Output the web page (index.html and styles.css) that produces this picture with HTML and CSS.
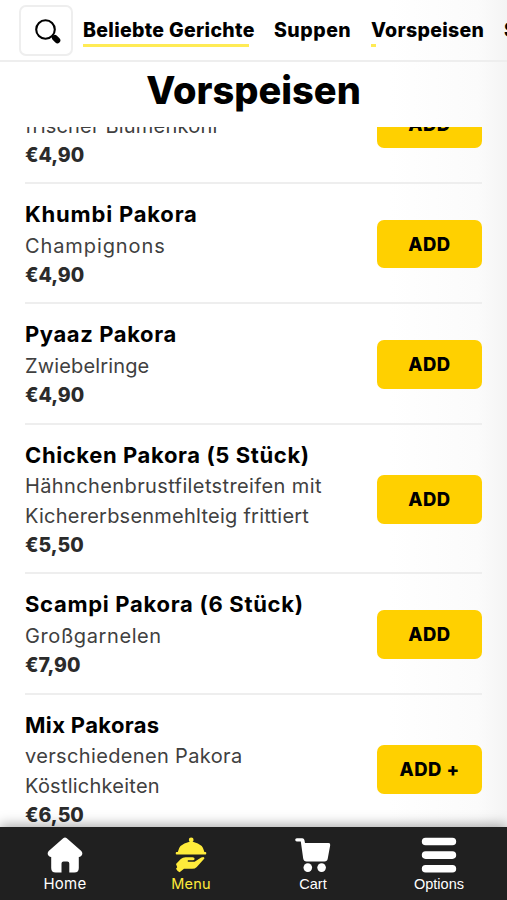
FILE: index.html
```html
<!DOCTYPE html>
<html lang="de">
<head>
<meta charset="utf-8">
<meta name="viewport" content="width=device-width, initial-scale=1">
<title>Vorspeisen</title>
<link rel="stylesheet" href="styles.css">
</head>
<body>
<div class="app">
  <header class="topbar">
    <button class="search" aria-label="Suche">
      <svg viewBox="0 0 26 26" width="26" height="26"><circle cx="10.5" cy="10.5" r="9.3" fill="none" stroke="#000" stroke-width="2.1"/><path d="M17 17l2 2" stroke="#000" stroke-width="2.4"/><path d="M19.9 18.9l2.5 2.5" stroke="#000" stroke-width="5.8" stroke-linecap="round"/></svg>
    </button>
    <nav class="tabs">
      <a class="tab tab-popular"><span>Beliebte Gerichte</span></a>
      <a class="tab tab-soups"><span>Suppen</span></a>
      <a class="tab tab-starters"><span>Vorspeisen</span></a>
      <a class="tab"><span>S</span></a>
    </nav>
  </header>
  <h1 class="heading">Vorspeisen</h1>
  <main class="list">
    <article class="dish dish-first">
      <div class="info"><p>frischer Blumenkohl</p><strong>€4,90</strong></div>
      <button class="add">ADD</button>
    </article>
    <article class="dish dish-khumbi">
      <div class="info"><h2>Khumbi Pakora</h2><p>Champignons</p><strong>€4,90</strong></div>
      <button class="add">ADD</button>
    </article>
    <article class="dish dish-pyaaz">
      <div class="info"><h2>Pyaaz Pakora</h2><p>Zwiebelringe</p><strong>€4,90</strong></div>
      <button class="add">ADD</button>
    </article>
    <article class="dish dish-chicken">
      <div class="info"><h2>Chicken Pakora (5 Stück)</h2><p>Hähnchenbrustfiletstreifen mit<br><span class="tight">Kichererbsenmehlteig frittiert</span></p><strong>€5,50</strong></div>
      <button class="add">ADD</button>
    </article>
    <article class="dish dish-scampi">
      <div class="info"><h2>Scampi Pakora (6 Stück)</h2><p>Großgarnelen</p><strong>€7,90</strong></div>
      <button class="add">ADD</button>
    </article>
    <article class="dish dish-mix">
      <div class="info"><h2>Mix Pakoras</h2><p>verschiedenen Pakora<br><span class="tight">Köstlichkeiten</span></p><strong>€6,50</strong></div>
      <button class="add">ADD +</button>
    </article>
  </main>
  <nav class="bottom">
    <a class="item"><svg viewBox="0 0 36 36" width="36" height="36"><path fill="#fff" d="M16.2 1.2Q18 0 19.8 1.2L34.3 14Q36.2 16.2 34.6 18.6Q33.5 20.2 31.8 20V31Q31.8 35.5 27.3 35.5H22.3V26.5Q22.3 24.5 20.3 24.5H16.5Q14.5 24.5 14.5 26.5V35.5H8.7Q4.2 35.5 4.2 31V20Q2.5 20.2 1.4 18.6Q-.2 16.2 1.7 14Z"/></svg><span class="label-home">Home</span></a>
    <a class="item active"><svg viewBox="0 0 36 36" width="36" height="36"><g fill="#ffeb3b"><circle cx="18.2" cy="2.9" r="2.4"/><path d="M4.8 15Q6 7.2 15.8 5H20.6Q30.2 7.2 31.4 15H32.3Q33.3 15 33.3 16.2T32.3 17.4H3.7Q2.7 17.4 2.7 16.2T3.7 15Z"/><path d="M3 27L7.8 22.1Q9.8 20.2 12.5 20.2H19.6Q21.6 20.2 21.6 21.7T19.6 23.2H14.8V24.7H21.6L28.2 20.6Q31.6 19.2 31.4 21.6L23.8 29.9Q22 31.8 19.2 31.8H11L6.6 35.3Q4.4 34.4 3 31.8L4.2 30.2Z"/></g></svg><span class="label-menu">Menu</span></a>
    <a class="item"><svg viewBox="0 0 36 36" width="36" height="36"><path fill="#fff" d="M1.8 1.2H7.3Q9 1.2 9.4 3L10 6H33.5Q35.6 6 35.2 8.3L32.7 21.8Q32.2 24.5 29.5 24.5H11.5Q8.7 24.5 8.2 21.6L5.8 4.4H1.8Q.2 4.4.2 2.8T1.8 1.2Z"/><circle cx="12.8" cy="30.6" r="4.3" fill="#fff"/><circle cx="26.6" cy="30.6" r="4.3" fill="#fff"/></svg><span class="label-sans">Cart</span></a>
    <a class="item"><svg viewBox="0 0 36 36" width="36" height="36"><path stroke="#fff" stroke-width="7.6" stroke-linecap="round" d="M4.6 4.5H31.4M4.6 18.1H31.4M4.6 31.8H31.4"/></svg><span class="label-sans">Options</span></a>
  </nav>
</div>
</body>
</html>
```
FILE: styles.css
```css
* { box-sizing: border-box; }
body { margin: 0; font-family: Inter, "Liberation Sans", sans-serif; color: #000; }
h1, h2, p { margin: 0; }
button { font-family: inherit; padding: 0; color: #000; }

.app {
  height: 900px;
  display: flex;
  flex-direction: column;
  overflow: hidden;
  background: linear-gradient(to right, #fff 390px, #fbfbfb 478px, #f4f4f4 507px);
}

.topbar {
  flex: none;
  display: flex;
  height: 62px;
  padding: 5px 0 0 19px;
  border-bottom: 2px solid #eee;
  overflow: hidden;
}
.search {
  flex: none;
  display: flex;
  width: 54px;
  height: 51px;
  padding: 14px 0 0 16px;
  border: 2px solid #eee;
  border-radius: 7px;
  background: #fff;
}
.search svg { flex: none; display: block; margin: -2px 0 0 -2px; }
.tabs { display: flex; gap: 20px; margin: 10px 0 0 10px; }
.tab {
  flex: none;
  height: 32px;
  font-size: 19.5px;
  font-weight: 800;
  line-height: 30px;
  white-space: nowrap;
  background: linear-gradient(#ffeb55, #ffeb55) no-repeat 0 29px / 0 3px;
}
.tab-popular { width: 171px; letter-spacing: .32px; background-size: 166px 3px; }
.tab-soups { width: 77px; letter-spacing: .5px; }
.tab-starters { width: 113px; letter-spacing: .32px; background-size: 5px 3px; }

.heading {
  flex: none;
  height: 65px;
  font-size: 38px;
  font-weight: 800;
  line-height: 56px;
  text-align: center;
}

.list { flex: 1; min-height: 0; overflow: hidden; padding: 0 25px; }
.dish {
  display: flex;
  align-items: center;
  justify-content: space-between;
  border-bottom: 2px solid #eee;
  padding: 14px 0 12.25px;
}
.dish-first { height: 120.25px; margin-top: -63.25px; --desc-spacing: .2px; }
.dish-first .info { padding-top: 34px; }
.dish-khumbi { --title-spacing: .8px; --desc-spacing: .9px; }
.dish-pyaaz { --title-spacing: .6px; --desc-spacing: .15px; }
.dish-chicken { --title-spacing: .61px; --desc-spacing: .38px; }
.dish-scampi { --title-spacing: .7px; --desc-spacing: .6px; }
.dish-mix { --title-spacing: .35px; --desc-spacing: .35px; }
.info { white-space: nowrap; }
.info h2 {
  font-size: 22px;
  font-weight: 700;
  line-height: 33px;
  letter-spacing: var(--title-spacing, 0);
}
.info p {
  position: relative;
  top: .5px;
  font-size: 20px;
  font-weight: 400;
  line-height: 29.5px;
  letter-spacing: var(--desc-spacing, 0);
  color: #404040;
}
.tight { letter-spacing: .24px; }
.info strong {
  display: block;
  font-size: 19.5px;
  font-weight: 800;
  line-height: 29.5px;
  color: #2b2b2b;
}
.add {
  flex: none;
  width: 105px;
  height: 48.5px;
  border: 0;
  border-radius: 7px;
  background: #ffd000;
  font-size: 18.5px;
  font-weight: 800;
  letter-spacing: .5px;
}

.bottom {
  flex: none;
  position: relative;
  display: grid;
  grid-template-columns: 130px 122px 122px 130px;
  height: 73px;
  background: #202020;
  box-shadow: 0 -2px 12px rgba(0, 0, 0, .35);
}
.item {
  display: flex;
  flex-direction: column;
  align-items: center;
  padding-top: 10px;
  color: #fff;
  font-size: 14px;
  line-height: 18px;
}
.item svg { display: block; margin-bottom: 2px; }
.active { color: #ffeb3b; }
.label-home { font-size: 15px; letter-spacing: .3px; }
.label-menu { font-size: 14.5px; letter-spacing: .2px; }
.label-sans { font-family: "Liberation Sans", Arial, sans-serif; font-size: 14.5px; }
```
